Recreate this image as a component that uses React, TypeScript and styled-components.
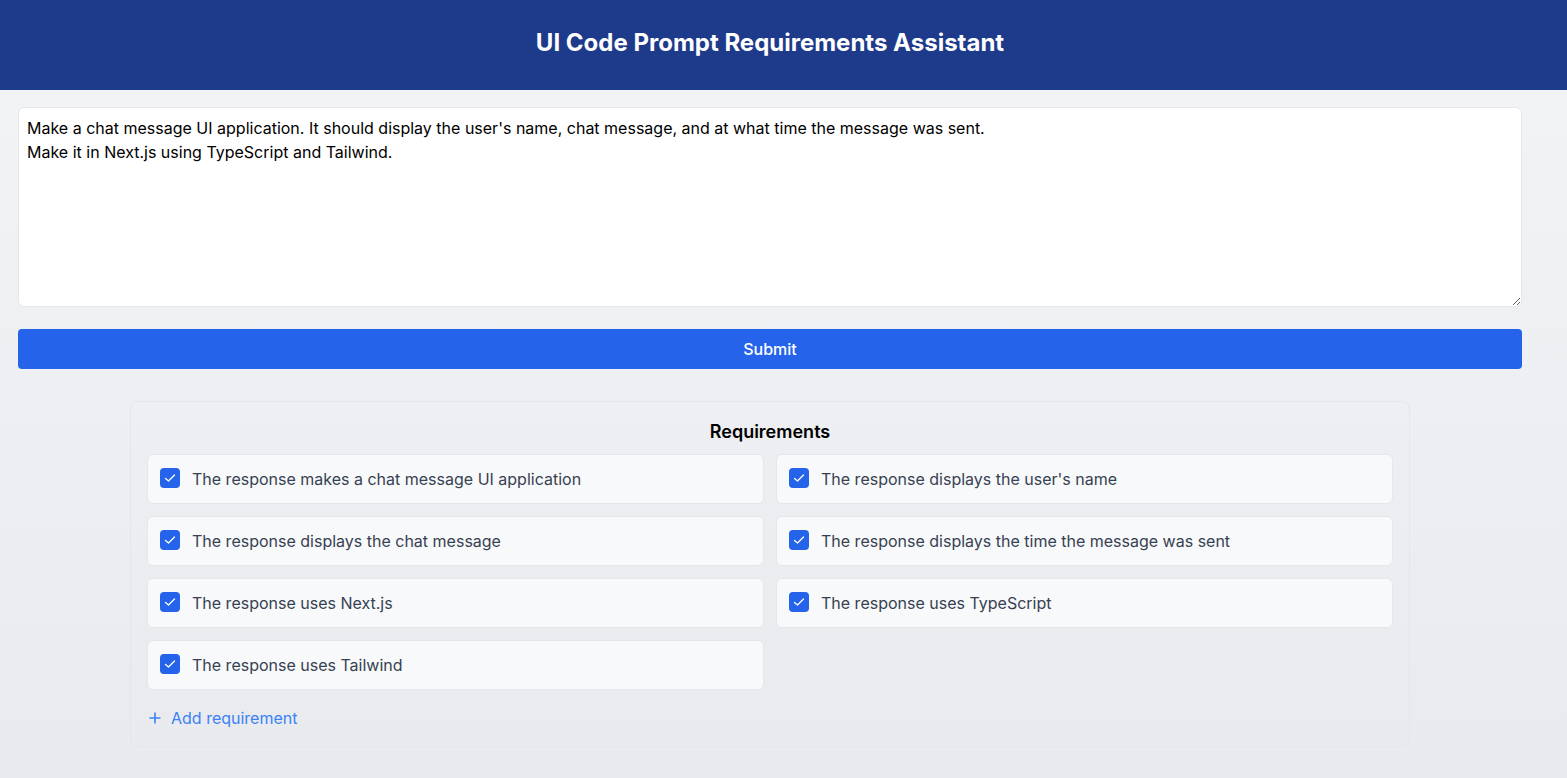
import React from "react";
import styled, { createGlobalStyle } from "styled-components";

const Global = createGlobalStyle`
  html, body { margin: 0; padding: 0; }
  body { font-family: Inter, "Noto Sans", sans-serif; }
  * { box-sizing: border-box; }
`;

const Page = styled.div`
  min-height: 100vh;
  background: linear-gradient(to bottom, #f3f4f6, #e9eaee);
  display: flex;
  flex-direction: column;
`;

const Header = styled.header`
  height: 90px;
  background: #1e3a8a;
  display: flex;
  align-items: center;
`;

const HeaderInner = styled.div`
  width: 1540px;
  padding: 0 18px;
  text-align: center;
`;

const Title = styled.h1`
  margin: 0;
  color: #ffffff;
  font-size: 24px;
  font-weight: 700;
  line-height: 32px;
  padding-bottom: 4px;
`;

const Main = styled.main`
  width: 1540px;
  padding: 17px 18px 30px;
  display: flex;
  flex-direction: column;
`;

const TextArea = styled.textarea`
  width: 100%;
  height: 200px;
  padding: 8px;
  font-family: Inter, "Noto Sans", sans-serif;
  font-size: 16px;
  line-height: 24px;
  color: #000;
  background: #fff;
  border: 1px solid #e5e7eb;
  border-radius: 6px;
  outline: none;
`;

const SubmitButton = styled.button`
  margin-top: 22px;
  height: 40px;
  width: 100%;
  background: #2563eb;
  color: #fff;
  border: none;
  border-radius: 4px;
  font-family: Inter, "Noto Sans", sans-serif;
  font-size: 16px;
  font-weight: 500;
`;

const Panel = styled.section`
  margin: 32px auto 0;
  width: 1280px;
  border: 1px solid #e4e6ea;
  border-radius: 8px;
  padding: 16px;
  display: flex;
  flex-direction: column;
`;

const PanelTitle = styled.h2`
  margin: 0 0 8px;
  text-align: center;
  font-size: 18px;
  font-weight: 600;
  line-height: 28px;
  color: #000;
`;

const Grid = styled.div`
  display: grid;
  grid-template-columns: 1fr 1fr;
  gap: 12px;
`;

const Item = styled.label`
  height: 50px;
  background: #f8f9fb;
  border: 1px solid #e5e7eb;
  border-radius: 6px;
  display: flex;
  align-items: center;
  gap: 12px;
  padding: 0 12px;
  font-size: 16px;
  color: #374151;
`;

const Box = styled.span`
  width: 20px;
  height: 20px;
  border-radius: 4px;
  background: #2563eb;
  display: flex;
  align-items: center;
  justify-content: center;
  flex-shrink: 0;
  margin-top: -3px;
`;

const AddButton = styled.button`
  margin-top: 16px;
  margin-left: 2px;
  align-self: flex-start;
  background: none;
  border: none;
  padding: 0;
  height: 24px;
  display: flex;
  align-items: center;
  gap: 10px;
  color: #3b82f6;
  font-family: Inter, "Noto Sans", sans-serif;
  font-size: 16px;
`;

const requirements = [
  "The response makes a chat message UI application",
  "The response displays the user's name",
  "The response displays the chat message",
  "The response displays the time the message was sent",
  "The response uses Next.js",
  "The response uses TypeScript",
  "The response uses Tailwind",
];

const Check = () => (
  <svg width="12" height="12" viewBox="0 0 12 12" fill="none">
    <path d="M1.5 6.5 L4.5 9 L10.5 3" stroke="#fff" strokeWidth="1.3" strokeLinecap="round" strokeLinejoin="round" />
  </svg>
);

const Plus = () => (
  <svg width="12" height="12" viewBox="0 0 12 12" fill="none">
    <path d="M6 0.5 V11.5 M0.5 6 H11.5" stroke="#3b82f6" strokeWidth="1.6" />
  </svg>
);

export default function App() {
  return (
    <Page>
      <Global />
      <Header>
        <HeaderInner>
          <Title>UI Code Prompt Requirements Assistant</Title>
        </HeaderInner>
      </Header>
      <Main>
        <TextArea
          defaultValue={
            "Make a chat message UI application. It should display the user's name, chat message, and at what time the message was sent.\nMake it in Next.js using TypeScript and Tailwind."
          }
        />
        <SubmitButton>Submit</SubmitButton>
        <Panel>
          <PanelTitle>Requirements</PanelTitle>
          <Grid>
            {requirements.map((r) => (
              <Item key={r}>
                <Box>
                  <Check />
                </Box>
                {r}
              </Item>
            ))}
          </Grid>
          <AddButton>
            <Plus />
            Add requirement
          </AddButton>
        </Panel>
      </Main>
    </Page>
  );
}
